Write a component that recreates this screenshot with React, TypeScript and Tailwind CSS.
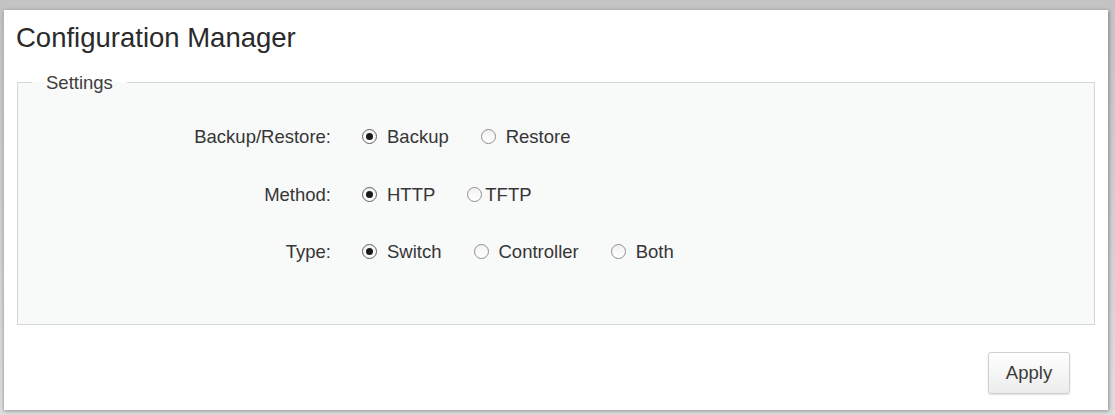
import React from 'react';

type Option = { label: string; checked?: boolean; tight?: boolean };

const rows: { label: string; options: Option[] }[] = [
  {
    label: 'Backup/Restore:',
    options: [{ label: 'Backup', checked: true }, { label: 'Restore' }],
  },
  {
    label: 'Method:',
    options: [{ label: 'HTTP', checked: true }, { label: 'TFTP', tight: true }],
  },
  {
    label: 'Type:',
    options: [
      { label: 'Switch', checked: true },
      { label: 'Controller' },
      { label: 'Both' },
    ],
  },
];

const Radio = ({ checked }: { checked?: boolean }) => (
  <span
    className={`flex h-[15px] w-[15px] shrink-0 items-center justify-center rounded-full border bg-gradient-to-b from-[#f2f2f2] to-white ${
      checked ? 'border-[#606060]' : 'border-[#8f8f8f]'
    }`}
  >
    {checked && <span className="h-[7px] w-[7px] rounded-full bg-[#1a1a1a]" />}
  </span>
);

const App = () => {
  return (
    <div
      className="h-[415px] w-[1115px] bg-gradient-to-b from-[#c4c4c4] to-[#dedede] pt-[10px] pl-[3px]"
      style={{ fontFamily: '"Liberation Sans", Arial, sans-serif' }}
    >
      <div className="flex h-[400px] w-[1105px] flex-col border-l border-[#b8b8b8] bg-white shadow-[1px_1px_4px_rgba(0,0,0,0.35)]">
        <h1 className="pl-[12px] pt-[12px] text-[27.5px] leading-[31px] text-[#2a2a2a]">
          Configuration Manager
        </h1>

        <fieldset className="mt-[19px] ml-[13px] mr-[13px] border border-[#d3d7d7] bg-[#f8f9f9]">
          <legend className="ml-[14px] px-[14px] text-[18.5px] leading-[21px] text-[#3d3d3d]">
            Settings
          </legend>
          <div className="flex flex-col gap-[36.5px] pt-[33px] pb-[62px]">
            {rows.map(row => (
              <div key={row.label} className="flex items-center text-[18.5px] leading-[21px] text-[#363636]">
                <div className="w-[313px] shrink-0 text-right">{row.label}</div>
                <div className="ml-[31px] flex items-center gap-[32px]">
                  {row.options.map(opt => (
                    <label
                      key={opt.label}
                      className={`flex items-center ${opt.tight ? 'gap-[3px]' : 'gap-[10px]'}`}
                    >
                      <Radio checked={opt.checked} />
                      <span>{opt.label}</span>
                    </label>
                  ))}
                </div>
              </div>
            ))}
          </div>
        </fieldset>

        <div className="flex justify-end pr-[38px] pt-[27px]">
          <button className="h-[42px] w-[82px] rounded-[3px] border border-[#cfcfcf] bg-gradient-to-b from-white to-[#ececec] text-[18.5px] text-[#3a3a3a] shadow-[0_1px_2px_rgba(0,0,0,0.12)]">
            Apply
          </button>
        </div>
      </div>
    </div>
  );
};

export default App;
